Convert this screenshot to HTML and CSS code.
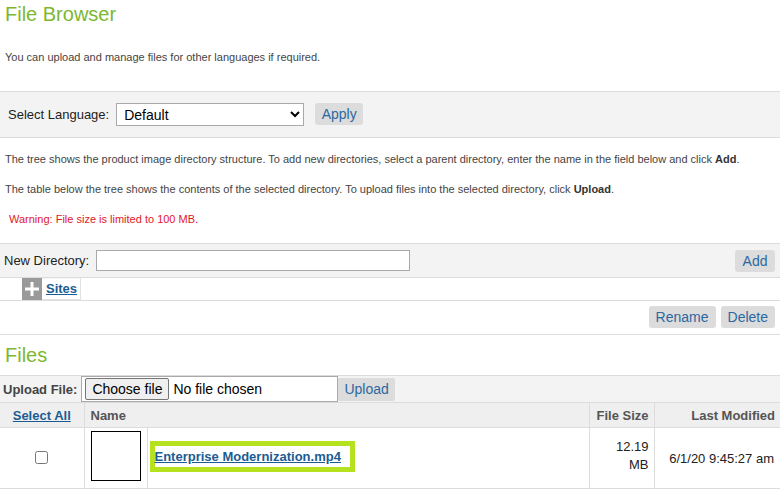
FILE: index.html
```html
<!DOCTYPE html>
<html lang="en">
<head>
<meta charset="utf-8">
<title>File Browser</title>
<link rel="stylesheet" href="styles.css">
</head>
<body>
<h1 class="title">File Browser</h1>
<p class="intro">You can upload and manage files for other languages if required.</p>

<div class="bar lang-bar">
  <label class="bar-label" for="lang">Select Language:</label>
  <select id="lang" class="select"><option>Default</option></select>
  <button class="btn apply-btn" type="button">Apply</button>
</div>

<div class="help">
  <p>The tree shows the product image directory structure. To add new directories, select a parent directory, enter the name in the field below and click <b>Add</b>.</p>
  <p>The table below the tree shows the contents of the selected directory. To upload files into the selected directory, click <b>Upload</b>.</p>
  <p class="warning">Warning: File size is limited to 100 MB.</p>
</div>

<div class="bar dir-bar">
  <label class="bar-label" for="newdir">New Directory:</label>
  <input id="newdir" class="text-input" type="text">
  <button class="btn add-btn" type="button">Add</button>
</div>

<div class="tree-row">
  <span class="node">
    <span class="plus"><svg width="14" height="14" viewBox="0 0 14 14"><rect x="5.5" y="0" width="3" height="14" fill="#fff"/><rect x="0" y="5.5" width="14" height="3" fill="#fff"/></svg></span>
    <a class="link node-link" href="#">Sites</a>
  </span>
</div>

<div class="actions">
  <button class="btn" type="button">Rename</button>
  <button class="btn" type="button">Delete</button>
</div>

<h2 class="title files-title">Files</h2>

<div class="upload-row">
  <span class="upload-label">Upload File:</span>
  <span class="file-box">
    <span class="file-btn">Choose file</span>
    <span class="file-name">No file chosen</span>
  </span>
  <button class="btn upload-btn" type="button">Upload</button>
</div>

<table class="files">
  <colgroup>
    <col class="c-check">
    <col class="c-thumb">
    <col class="c-name">
    <col class="c-size">
    <col class="c-date">
  </colgroup>
  <thead>
    <tr>
      <th class="th-center"><a class="link" href="#">Select All</a></th>
      <th class="th-left" colspan="2">Name</th>
      <th class="th-right">File Size</th>
      <th class="th-right">Last Modified</th>
    </tr>
  </thead>
  <tbody>
    <tr>
      <td class="td-center"><input type="checkbox" class="check"></td>
      <td class="td-thumb"><span class="thumb"></span></td>
      <td class="td-name"><a class="link file-link" href="#">Enterprise Modernization.mp4</a></td>
      <td class="td-size">12.19<br>MB</td>
      <td class="td-date">6/1/20 9:45:27 am</td>
    </tr>
  </tbody>
</table>
</body>
</html>
```

FILE: styles.css
```css
* { box-sizing: border-box; }

body {
  margin: 0;
  width: 780px;
  font-family: "Liberation Sans", Arial, sans-serif;
  color: #333;
  background: #fff;
}

.title {
  margin: 3px 0 0;
  padding-left: 5px;
  font-size: 20px;
  line-height: 23px;
  font-weight: normal;
  color: #7cb82f;
}

.intro {
  margin: 25px 0 0;
  padding-left: 5px;
  font-size: 11px;
  line-height: 13px;
  color: #444;
}

.bar {
  display: flex;
  align-items: center;
  background: #f3f3f3;
  border-top: 1px solid #dcdcdc;
  border-bottom: 1px solid #dcdcdc;
  font-size: 13px;
  color: #222;
}

.lang-bar {
  margin-top: 27px;
  height: 47px;
  padding-left: 8px;
}

.select {
  margin-left: 7px;
  width: 188px;
  height: 23px;
  padding: 0 3px;
  font: 14px "Liberation Sans", Arial, sans-serif;
  color: #000;
  background: #fff;
  border: 1px solid #a9a9a9;
  border-radius: 0;
}

.btn {
  height: 22px;
  padding: 0 7px;
  font: 14px/22px "Liberation Sans", Arial, sans-serif;
  color: #2c68a0;
  background: #dcdcdc;
  border: 0;
  border-radius: 3px;
}

.apply-btn { margin-left: 11px; padding: 0 6.5px; margin-top: -1px; }

.help {
  padding-top: 15px;
  font-size: 11px;
  line-height: 13px;
  color: #444;
}

.help p {
  margin: 0 0 17px;
  padding-left: 5px;
}

.help b { color: #333; }

.help .warning {
  padding-left: 9px;
  color: #e3161f;
}

.dir-bar {
  height: 35px;
  padding: 0 5px 0 4px;
}

.text-input {
  margin-left: 7px;
  width: 314px;
  height: 21px;
  border: 1px solid #a9a9a9;
  background: #fff;
}

.add-btn { margin-left: auto; padding: 0 7.5px; }

.tree-row {
  display: flex;
  height: 23px;
  padding-left: 22px;
  border-bottom: 1px solid #dcdcdc;
}

.node {
  display: flex;
  align-items: center;
  height: 22px;
  border: 1px solid #e2e2e2;
  border-left: 0;
  border-top: 0;
  background: #f7f7f7;
}

.plus {
  display: flex;
  align-items: center;
  justify-content: center;
  width: 20px;
  height: 22px;
  background: #9a9a9a;
}

.link {
  color: #1b5c92;
  font-weight: bold;
  text-decoration: underline;
}

.node-link {
  padding: 0 3px 0 4px;
  font-size: 13px;
  background: #fff;
  line-height: 20px;
}

.actions {
  display: flex;
  justify-content: flex-end;
  align-items: center;
  gap: 5px;
  height: 34px;
  padding: 0 5px 1px 0;
  border-bottom: 1px solid #dcdcdc;
}

.files-title { margin-top: 9px; }

.upload-row {
  display: flex;
  align-items: center;
  margin-top: 8px;
  height: 27px;
  padding-left: 3px;
  background: #f3f3f3;
  border-top: 1px solid #dcdcdc;
}

.upload-label {
  font-size: 13px;
  font-weight: bold;
  color: #444;
}

.file-box {
  display: flex;
  align-items: center;
  margin-left: 4px;
  width: 257px;
  height: 26px;
  padding-left: 3px;
  background: #fff;
  border: 1px solid #a9a9a9;
  font-size: 14px;
  color: #000;
}

.file-btn {
  height: 22px;
  padding: 0 6px;
  line-height: 20px;
  background: #efefef;
  border: 1px solid #767676;
  border-radius: 2px;
}

.file-name { margin-left: 4px; }

.upload-btn { height: 23px; padding: 0 6px; border-radius: 2px; }

.files {
  width: 780px;
  border-collapse: collapse;
  table-layout: fixed;
  font-size: 13px;
}

.c-check { width: 84px; }
.c-thumb { width: 63px; }
.c-name { width: 442px; }
.c-size { width: 65px; }
.c-date { width: 126px; }

.files th {
  height: 25px;
  padding: 0 5px;
  background: #efefef;
  color: #555;
  font-weight: bold;
  white-space: nowrap;
  border: 1px solid #dcdcdc;
}

.files td {
  height: 61px;
  padding: 0 6px;
  border: 1px solid #dcdcdc;
  color: #222;
  vertical-align: middle;
}

.files tr > :first-child { border-left: 0; }
.files tr > :last-child { border-right: 0; }

.th-center, .td-center { text-align: center; }
.files .th-left { text-align: left; padding-left: 6px; }
.th-right { text-align: right; }

.check {
  width: 13px;
  height: 13px;
  margin: 2px 0 0;
}

.files .td-thumb { padding: 0 6px; }

.thumb {
  display: block;
  width: 50px;
  height: 50px;
  margin-top: -5px;
  border: 1px solid #000;
  background: #fff;
}

.files .td-name { padding: 0 0 4px 2px; }

.file-link {
  display: inline-block;
  padding: 3px 9px 3px 0;
  line-height: 15px;
  border: 5px solid #b6e11e;
}

.files .td-size {
  text-align: right;
  line-height: 18px;
  padding: 0 5px 4px 0;
}

.files .td-date {
  text-align: right;
  padding: 0 6px 0 0;
}
```
